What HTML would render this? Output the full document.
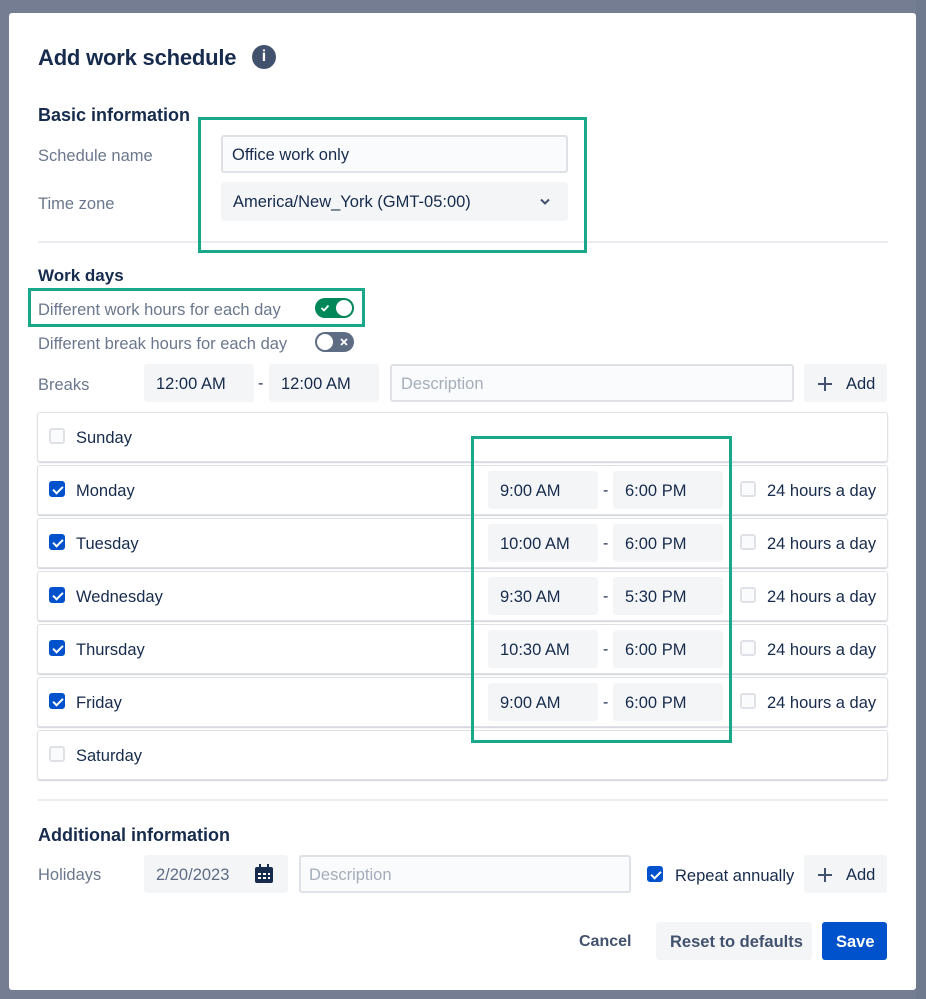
<!DOCTYPE html>
<html><head><style>
*{box-sizing:border-box;margin:0;padding:0}
body{width:926px;height:999px;background:#747d92;font-family:"Liberation Sans",sans-serif;position:relative;overflow:hidden;color:#172b4d}
.m{position:absolute;left:9px;top:13px;width:907px;height:977px;background:#fff;border-radius:3px}
.a{position:absolute}
.lbl{color:#6b778c;font-size:16.5px;margin-top:2px}
.h{font-size:18px;font-weight:bold;color:#172b4d;margin-top:2px}
.inp{position:absolute;background:#f4f5f7;border-radius:3px;font-size:16.5px;color:#172b4d;display:flex;align-items:center;padding-left:12px;padding-top:2px}
.bord{background:#fafbfc;border:2px solid #dfe1e6}
.ph{color:#a5adba}
.row{position:absolute;left:37px;width:851px;height:50px;border:1px solid #dfe1e6;border-radius:3px;box-shadow:0 1px 1px rgba(9,30,66,.2)}
.cb{position:absolute;width:16px;height:16px;border-radius:3px;border:2px solid #dfe1e6;background:#fafbfc}
.cb.on{background:#0052cc;border-color:#0052cc}
.cb.on:after{content:"";position:absolute;left:4px;top:1px;width:4px;height:8px;border:solid #fff;border-width:0 2px 2px 0;transform:rotate(45deg)}
.day{position:absolute;left:38px;font-size:16.5px;margin-top:2px}
.green{position:absolute;border:3px solid #19a98a}
.dash{position:absolute;font-size:16px;margin-top:2px}
</style></head><body>
<div class="a" style="left:916px;top:0;width:10px;height:999px;background:#6f7a8e"></div>
<div class="m">
<div class="a" style="left:29px;top:32px;font-size:22px;font-weight:bold;letter-spacing:-0.2px">Add work schedule</div>
<div class="a" style="left:243px;top:32px;width:24px;height:24px;border-radius:50%;background:#42526e;color:#fff;font-weight:bold;font-size:16px;text-align:center;line-height:24px">i</div>
<div class="a h" style="left:29px;top:90px">Basic information</div>
<div class="a lbl" style="left:29px;top:132px">Schedule name</div>
<div class="a lbl" style="left:29px;top:180px">Time zone</div>
<div class="inp bord" style="left:212px;top:122px;width:347px;height:38px;padding-left:9px">Office work only</div>
<div class="inp" style="left:212px;top:169px;width:347px;height:39px">America/New_York (GMT-05:00)<svg style="position:absolute;right:18px;top:16px" width="10" height="7" viewBox="0 0 10 7"><path d="M1 1.5L5 5.5L9 1.5" stroke="#42526e" stroke-width="2" fill="none"/></svg></div>
<div class="a" style="left:29px;top:228px;width:850px;height:2px;background:#ebecf0"></div>
<div class="a h" style="left:29px;top:251px;font-size:17px">Work days</div>
<div class="a lbl" style="left:29px;top:286px">Different work hours for each day</div>
<div class="a" style="left:306px;top:285px;width:39px;height:20px;border-radius:10px;background:#00875a"><div class="a" style="right:2px;top:2px;width:16px;height:16px;border-radius:50%;background:#fff"></div><svg class="a" style="left:5px;top:5px" width="10" height="10" viewBox="0 0 10 10"><path d="M1.5 5L4 7.5L8.5 2.5" stroke="#fff" stroke-width="1.8" fill="none"/></svg></div>
<div class="a lbl" style="left:29px;top:320px">Different break hours for each day</div>
<div class="a" style="left:306px;top:319px;width:39px;height:20px;border-radius:10px;background:#5e6c84"><div class="a" style="left:2px;top:2px;width:16px;height:16px;border-radius:50%;background:#fff"></div><svg class="a" style="left:25px;top:6px" width="8" height="8" viewBox="0 0 8 8"><path d="M1 1L7 7M7 1L1 7" stroke="#fff" stroke-width="1.8"/></svg></div>
<div class="a lbl" style="left:29px;top:361px">Breaks</div>
<div class="inp" style="left:135px;top:351px;width:110px;height:38px">12:00 AM</div>
<div class="dash" style="left:249px;top:360px">-</div>
<div class="inp" style="left:260px;top:351px;width:110px;height:38px">12:00 AM</div>
<div class="inp bord ph" style="left:381px;top:351px;width:404px;height:38px;padding-left:9px">Description</div>
<div class="inp" style="left:795px;top:351px;width:83px;height:38px;padding-left:14px"><svg width="14" height="14" viewBox="0 0 14 14" style="margin-right:14px"><path d="M7 0V14M0 7H14" stroke="#42526e" stroke-width="2"/></svg>Add</div>
</div>
<div class="row" style="top:412px"></div>
<div class="cb" style="left:49px;top:428px"></div><div class="day" style="left:76px;top:427px">Sunday</div>

<div class="row" style="top:465px"></div>
<div class="cb on" style="left:49px;top:481px"></div><div class="day" style="left:76px;top:480px">Monday</div>
<div class="inp" style="left:488px;top:471px;width:110px;height:38px">9:00 AM</div><div class="dash" style="left:603px;top:480px">-</div><div class="inp" style="left:613px;top:471px;width:110px;height:38px">6:00 PM</div>
<div class="cb" style="left:740px;top:481px"></div><div class="day" style="left:767px;top:480px">24 hours a day</div>

<div class="row" style="top:518px"></div>
<div class="cb on" style="left:49px;top:534px"></div><div class="day" style="left:76px;top:533px">Tuesday</div>
<div class="inp" style="left:488px;top:524px;width:110px;height:38px">10:00 AM</div><div class="dash" style="left:603px;top:533px">-</div><div class="inp" style="left:613px;top:524px;width:110px;height:38px">6:00 PM</div>
<div class="cb" style="left:740px;top:534px"></div><div class="day" style="left:767px;top:533px">24 hours a day</div>

<div class="row" style="top:571px"></div>
<div class="cb on" style="left:49px;top:587px"></div><div class="day" style="left:76px;top:586px">Wednesday</div>
<div class="inp" style="left:488px;top:577px;width:110px;height:38px">9:30 AM</div><div class="dash" style="left:603px;top:586px">-</div><div class="inp" style="left:613px;top:577px;width:110px;height:38px">5:30 PM</div>
<div class="cb" style="left:740px;top:587px"></div><div class="day" style="left:767px;top:586px">24 hours a day</div>

<div class="row" style="top:624px"></div>
<div class="cb on" style="left:49px;top:640px"></div><div class="day" style="left:76px;top:639px">Thursday</div>
<div class="inp" style="left:488px;top:630px;width:110px;height:38px">10:30 AM</div><div class="dash" style="left:603px;top:639px">-</div><div class="inp" style="left:613px;top:630px;width:110px;height:38px">6:00 PM</div>
<div class="cb" style="left:740px;top:640px"></div><div class="day" style="left:767px;top:639px">24 hours a day</div>

<div class="row" style="top:677px"></div>
<div class="cb on" style="left:49px;top:693px"></div><div class="day" style="left:76px;top:692px">Friday</div>
<div class="inp" style="left:488px;top:683px;width:110px;height:38px">9:00 AM</div><div class="dash" style="left:603px;top:692px">-</div><div class="inp" style="left:613px;top:683px;width:110px;height:38px">6:00 PM</div>
<div class="cb" style="left:740px;top:693px"></div><div class="day" style="left:767px;top:692px">24 hours a day</div>

<div class="row" style="top:730px"></div>
<div class="cb" style="left:49px;top:746px"></div><div class="day" style="left:76px;top:745px">Saturday</div>

<div class="a" style="left:38px;top:799px;width:850px;height:2px;background:#ebecf0"></div>
<div class="a h" style="left:38px;top:823px">Additional information</div>
<div class="a lbl" style="left:38px;top:864px">Holidays</div>
<div class="inp" style="left:144px;top:855px;width:144px;height:38px;color:#5e6c84">2/20/2023
<svg style="position:absolute;left:109px;top:8px" width="22" height="22" viewBox="0 0 22 22"><rect x="2" y="4" width="18" height="16" rx="2" fill="#172b4d"/><rect x="6" y="1" width="2" height="5" fill="#172b4d"/><rect x="14" y="1" width="2" height="5" fill="#172b4d"/><g fill="#fff"><rect x="5" y="10" width="3" height="2"/><rect x="10" y="10" width="3" height="2"/><rect x="15" y="10" width="2" height="2"/><rect x="5" y="14" width="3" height="2"/><rect x="10" y="14" width="3" height="2"/><rect x="15" y="14" width="2" height="2"/></g></svg></div>
<div class="inp bord ph" style="left:299px;top:855px;width:332px;height:38px;padding-left:8px">Description</div>
<div class="cb on" style="left:647px;top:866px"></div><div class="day" style="left:675px;top:865px">Repeat annually</div>
<div class="inp" style="left:804px;top:855px;width:83px;height:38px;padding-left:14px"><svg width="14" height="14" viewBox="0 0 14 14" style="margin-right:14px"><path d="M7 0V14M0 7H14" stroke="#42526e" stroke-width="2"/></svg>Add</div>
<div class="a" style="left:579px;top:933px;font-size:16px;color:#42526e;font-weight:bold">Cancel</div>
<div class="inp" style="left:656px;top:922px;width:156px;height:38px;color:#42526e;font-weight:bold;padding-left:14px">Reset to defaults</div>
<div class="inp" style="left:822px;top:922px;width:65px;height:38px;background:#0052cc;color:#fff;font-weight:bold;padding-left:14px">Save</div>

<div class="green" style="left:198px;top:117px;width:389px;height:136px"></div>
<div class="green" style="left:28px;top:288px;width:337px;height:39px"></div>
<div class="green" style="left:471px;top:436px;width:261px;height:307px"></div>
</body></html>
